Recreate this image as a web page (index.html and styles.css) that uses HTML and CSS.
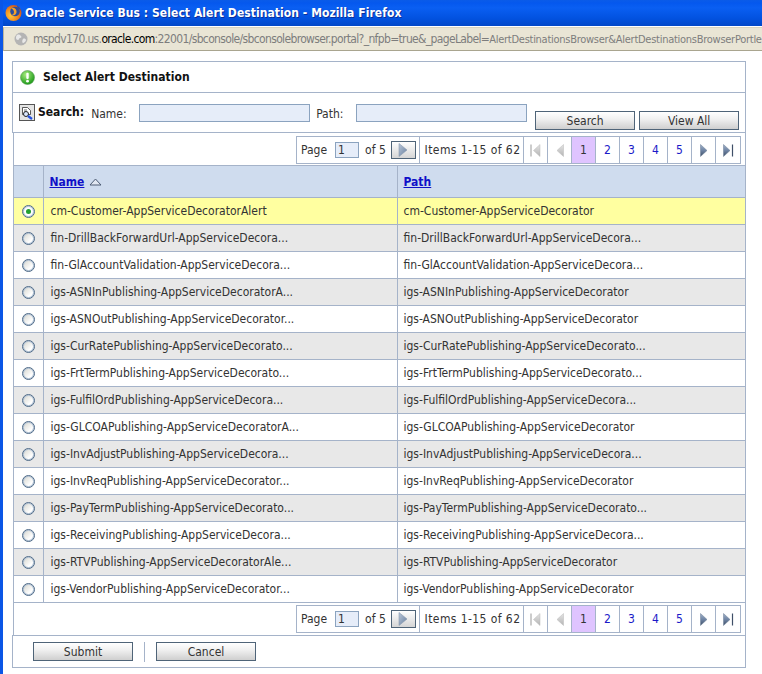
FILE: index.html
```html
<!DOCTYPE html>
<html lang="en">
<head>
<meta charset="utf-8">
<title>Oracle Service Bus : Select Alert Destination - Mozilla Firefox</title>
<link rel="stylesheet" href="styles.css">
</head>
<body>
<svg class="defs" width="0" height="0" aria-hidden="true"><defs>
  <linearGradient id="arrow" x1="0" y1="0" x2="0" y2="1"><stop offset="0" stop-color="#9fb0c8"/><stop offset=".5" stop-color="#6f84a4"/><stop offset="1" stop-color="#3f5068"/></linearGradient>
  <linearGradient id="arrow-off" x1="0" y1="0" x2="0" y2="1"><stop offset="0" stop-color="#e4e4e4"/><stop offset="1" stop-color="#b4b4b4"/></linearGradient>
  <linearGradient id="arrow-go" x1="0" y1="0" x2="1" y2="1"><stop offset="0" stop-color="#b9c6d8"/><stop offset="1" stop-color="#68809f"/></linearGradient>
  <radialGradient id="fox" cx="35%" cy="65%" r="75%"><stop offset="0" stop-color="#ffc83c"/><stop offset=".55" stop-color="#f08a1d"/><stop offset="1" stop-color="#c9461a"/></radialGradient>
  <radialGradient id="g" cx="40%" cy="30%" r="75%"><stop offset="0" stop-color="#a8ec80"/><stop offset="1" stop-color="#12940f"/></radialGradient>
</defs></svg>
<div class="titlebar">
  <svg class="ff-icon" width="17" height="18" viewBox="0 0 17 18"><circle cx="8.500" cy="9" r="8" fill="url(#fox)"/><circle cx="10" cy="7.500" r="4.800" fill="#2c4d9c"/><path d="M6 4c3-1 6 1 5.500 4.500C11 11 8 12.500 5.500 11c2 .2 3.500-1 3.500-3S7.500 5 6 4z" fill="#f4a12a"/><path d="M12 1.500c2 1 3.500 3 4 5.500-1-1.500-2-2.500-3.500-3z" fill="#2c4d9c"/></svg>
  <span class="title-text">Oracle Service Bus : Select Alert Destination - Mozilla Firefox</span>
</div>
<div class="addressbar">
  <svg class="globe" width="14" height="14" viewBox="0 0 14 14"><circle cx="7" cy="7" r="6.500" fill="#b4b4b4"/><path d="M3 3c2-1 3 0 4 1s0 2-1 2-1 2-2 2-2-1-2-2 0-2 1-3zM9 7c1-1 3 0 3 1s-2 3-3 3-1-3 0-4z" fill="#e8e8e8"/></svg>
  <span class="url"><span class="url-dim">mspdv170.us.</span>oracle.com<span class="url-dim">:22001/sbconsole/sbconsolebrowser.portal?_nfpb=true&amp;_pageLabel=<span class="url-tail">AlertDestinationsBrowser&amp;AlertDestinationsBrowserPortle</span></span></span>
</div>
<main class="page">
  <section class="panel-head">
    <svg width="15" height="15" viewBox="0 0 15 15"><circle cx="7.500" cy="7.500" r="7" fill="url(#g)" stroke="#5a9a58" stroke-width=".6"/><rect x="6.300" y="2.800" width="2.400" height="6.200" rx="1" fill="#fff"/><circle cx="7.500" cy="11.200" r="1.400" fill="#fff"/></svg>
    <h1>Select Alert Destination</h1>
  </section>
  <section class="search">
    <svg class="search-icon" width="16" height="17" viewBox="0 0 16 17"><rect x=".5" y=".5" width="15" height="16" fill="#e4e4e4" stroke="#555"/><path d="M3.500 3.500h5l3 3v4h-8z" fill="#fff" stroke="#333" stroke-width=".8"/><path d="M5 6h3M5 8h2" stroke="#444" stroke-width=".8"/><circle cx="7" cy="10" r="2.500" fill="#dbe8ff" stroke="#222"/><path d="M9 12l4 3" stroke="#2250e0" stroke-width="2.200"/></svg>
    <b class="search-label">Search:</b>
    <label class="name-label">Name:</label><input class="field" aria-label="Name">
    <label class="path-label">Path:</label><input class="field" aria-label="Path">
    <button class="btn btn-search">Search</button>
    <button class="btn btn-all">View All</button>
  </section>
  <section class="grid">
    <div class="pager-row">
      <div class="pager">
        <div class="pg-page">Page<input class="pg-input" value="1" aria-label="Page"><span>of 5</span><span class="pg-go"><svg width="10" height="14" viewBox="0 0 10 14"><path d="M1 .5l8 6.500-8 6.500z" fill="url(#arrow-go)" stroke="#8a9ab0" stroke-width=".6"/></svg></span></div>
        <div class="pg-items">Items 1-15 of 62</div>
        <div class="pg-cell"><svg width="11" height="13" viewBox="0 0 11 13"><path d="M1 .5v12" stroke="#aaa" stroke-width="1.200"/><path d="M10 .5L3.500 6.500l6.500 6z" fill="url(#arrow-off)" stroke="#bbb" stroke-width=".5"/></svg></div>
        <div class="pg-cell"><svg width="8" height="13" viewBox="0 0 8 13"><path d="M7.500 .5L1 6.500l6.500 6z" fill="url(#arrow-off)" stroke="#bbb" stroke-width=".5"/></svg></div>
        <div class="pg-cell pg-on">1</div><div class="pg-cell">2</div><div class="pg-cell">3</div><div class="pg-cell">4</div><div class="pg-cell">5</div>
        <div class="pg-cell"><svg width="8" height="13" viewBox="0 0 8 13"><path d="M.5 .5L7 6.500l-6.500 6z" fill="url(#arrow)" stroke="#6b7c94" stroke-width=".5"/></svg></div>
        <div class="pg-cell"><svg width="11" height="13" viewBox="0 0 11 13"><path d="M.5 .5L7 6.500l-6.500 6z" fill="url(#arrow)" stroke="#6b7c94" stroke-width=".5"/><path d="M9.500 .5v12" stroke="#3f4f68" stroke-width="1.200"/></svg></div>
      </div>
    </div>
    <table>
      <thead><tr><th class="c1"></th><th class="c2"><a href="#">Name</a><svg class="sort" width="13" height="8" viewBox="0 0 13 8"><path d="M6.500 1L12 7H1z" fill="#e2e8f2" stroke="#4e5d75"/></svg></th><th><a href="#">Path</a></th></tr></thead>
      <tbody>
        <tr class="sel"><td class="c1"><span class="radio on"></span></td><td>cm-Customer-AppServiceDecoratorAlert</td><td>cm-Customer-AppServiceDecorator</td></tr>
        <tr class="alt"><td class="c1"><span class="radio"></span></td><td>fin-DrillBackForwardUrl-AppServiceDecora...</td><td>fin-DrillBackForwardUrl-AppServiceDecora...</td></tr>
        <tr><td class="c1"><span class="radio"></span></td><td>fin-GlAccountValidation-AppServiceDecora...</td><td>fin-GlAccountValidation-AppServiceDecora...</td></tr>
        <tr class="alt"><td class="c1"><span class="radio"></span></td><td>igs-ASNInPublishing-AppServiceDecoratorA...</td><td>igs-ASNInPublishing-AppServiceDecorator</td></tr>
        <tr><td class="c1"><span class="radio"></span></td><td>igs-ASNOutPublishing-AppServiceDecorator...</td><td>igs-ASNOutPublishing-AppServiceDecorator</td></tr>
        <tr class="alt"><td class="c1"><span class="radio"></span></td><td>igs-CurRatePublishing-AppServiceDecorato...</td><td>igs-CurRatePublishing-AppServiceDecorato...</td></tr>
        <tr><td class="c1"><span class="radio"></span></td><td>igs-FrtTermPublishing-AppServiceDecorato...</td><td>igs-FrtTermPublishing-AppServiceDecorato...</td></tr>
        <tr class="alt"><td class="c1"><span class="radio"></span></td><td>igs-FulfilOrdPublishing-AppServiceDecora...</td><td>igs-FulfilOrdPublishing-AppServiceDecora...</td></tr>
        <tr><td class="c1"><span class="radio"></span></td><td>igs-GLCOAPublishing-AppServiceDecoratorA...</td><td>igs-GLCOAPublishing-AppServiceDecorator</td></tr>
        <tr class="alt"><td class="c1"><span class="radio"></span></td><td>igs-InvAdjustPublishing-AppServiceDecora...</td><td>igs-InvAdjustPublishing-AppServiceDecora...</td></tr>
        <tr><td class="c1"><span class="radio"></span></td><td>igs-InvReqPublishing-AppServiceDecorator...</td><td>igs-InvReqPublishing-AppServiceDecorator</td></tr>
        <tr class="alt"><td class="c1"><span class="radio"></span></td><td>igs-PayTermPublishing-AppServiceDecorato...</td><td>igs-PayTermPublishing-AppServiceDecorato...</td></tr>
        <tr><td class="c1"><span class="radio"></span></td><td>igs-ReceivingPublishing-AppServiceDecora...</td><td>igs-ReceivingPublishing-AppServiceDecora...</td></tr>
        <tr class="alt"><td class="c1"><span class="radio"></span></td><td>igs-RTVPublishing-AppServiceDecoratorAle...</td><td>igs-RTVPublishing-AppServiceDecorator</td></tr>
        <tr><td class="c1"><span class="radio"></span></td><td>igs-VendorPublishing-AppServiceDecorator...</td><td>igs-VendorPublishing-AppServiceDecorator</td></tr>
      </tbody>
    </table>
    <div class="pager-row pager-row-bottom">
      <div class="pager">
        <div class="pg-page">Page<input class="pg-input" value="1" aria-label="Page"><span>of 5</span><span class="pg-go"><svg width="10" height="14" viewBox="0 0 10 14"><path d="M1 .5l8 6.500-8 6.500z" fill="url(#arrow-go)" stroke="#8a9ab0" stroke-width=".6"/></svg></span></div>
        <div class="pg-items">Items 1-15 of 62</div>
        <div class="pg-cell"><svg width="11" height="13" viewBox="0 0 11 13"><path d="M1 .5v12" stroke="#aaa" stroke-width="1.200"/><path d="M10 .5L3.500 6.500l6.500 6z" fill="url(#arrow-off)" stroke="#bbb" stroke-width=".5"/></svg></div>
        <div class="pg-cell"><svg width="8" height="13" viewBox="0 0 8 13"><path d="M7.500 .5L1 6.500l6.500 6z" fill="url(#arrow-off)" stroke="#bbb" stroke-width=".5"/></svg></div>
        <div class="pg-cell pg-on">1</div><div class="pg-cell">2</div><div class="pg-cell">3</div><div class="pg-cell">4</div><div class="pg-cell">5</div>
        <div class="pg-cell"><svg width="8" height="13" viewBox="0 0 8 13"><path d="M.5 .5L7 6.500l-6.500 6z" fill="url(#arrow)" stroke="#6b7c94" stroke-width=".5"/></svg></div>
        <div class="pg-cell"><svg width="11" height="13" viewBox="0 0 11 13"><path d="M.5 .5L7 6.500l-6.500 6z" fill="url(#arrow)" stroke="#6b7c94" stroke-width=".5"/><path d="M9.500 .5v12" stroke="#3f4f68" stroke-width="1.200"/></svg></div>
      </div>
    </div>
  </section>
  <section class="footer">
    <button class="btn">Submit</button>
    <span class="divider"></span>
    <button class="btn">Cancel</button>
  </section>
</main>
</body>
</html>
```
FILE: styles.css
```css
* { box-sizing: border-box; }
html, body { margin: 0; height: 674px; overflow: hidden; background: #fff; }
body {
  font-family: "DejaVu Sans Condensed", "DejaVu Sans", sans-serif;
  font-stretch: condensed;
  font-size: 12px;
  color: #333;
  border-left: 3px solid #0a56e6;
}
.defs { display: block; height: 0; }
.titlebar {
  margin-left: -3px;
  height: 26px;
  display: flex;
  align-items: center;
  gap: 3px;
  padding-left: 5px;
  background: linear-gradient(#0a5be8 0, #0558ee 12%, #0a5ff2 30%, #0252e0 70%, #0248c8 100%);
}
.ff-icon { flex: none; }
.title-text { color: #fff; font-weight: bold; font-size: 12px; letter-spacing: .06px; text-shadow: 1px 1px 0 #0a2f9a; }
.addressbar {
  height: 24px;
  margin-top: 1px;
  padding-left: 10px;
  display: flex;
  align-items: center;
  gap: 5px;
  background: #e9e5d5;
  border: 1px solid #b9b59f;
  border-right: 0;
  border-top-color: #d8d4c0;
  border-bottom-color: #a9a58f;
  white-space: nowrap;
  overflow: hidden;
}
.globe { flex: none; }
.url { font-size: 12px; letter-spacing: -.65px; color: #000; }
.url-dim { color: #7d7d7d; }
.url-tail { font-size: 11px; letter-spacing: -.27px; }
.page { width: 734px; margin: 10px 0 0 9px; }
.panel-head {
  height: 32px;
  border: 1px solid #a5b3c9;
  display: flex;
  align-items: center;
  gap: 8px;
  padding-left: 7px;
}
.panel-head h1 { margin: 0 0 1px; font-size: 12px; letter-spacing: .05px; font-weight: bold; color: #111; }
.search {
  height: 40px;
  border: 1px solid #a5b3c9;
  border-top: 0;
  display: flex;
  align-items: flex-start;
  padding: 11px 0 0 6px;
}
.search-icon { flex: none; }
.search-label { margin-left: 3px; color: #111; font-size: 12px; line-height: 16px; font-weight: bold; }
.name-label { margin-left: 7px; width: 48px; line-height: 20px; }
.path-label { margin-left: 6px; width: 40px; line-height: 20px; }
.field { width: 171px; height: 18px; background: #e6edf9; border: 1px solid #8ba3bf; padding: 0; }
.btn {
  width: 100px;
  height: 19px;
  padding: 0;
  font: inherit;
  font-stretch: inherit;
  color: #333;
  border: 1px solid #4f6478;
  background: linear-gradient(#fff, #f1f1f1 40%, #cfcfcf);
}
.btn-search { margin: 7px 0 0 8px; }
.btn-all { margin: 7px 0 0 4px; }
.grid { margin-left: 1px; border: 1px solid #a5b3c9; border-top: 0; border-bottom: 0; }
.pager-row { height: 32px; display: flex; justify-content: flex-end; padding: 3px 4px 0 0; }
.pager-row-bottom { padding-top: 2px; }
.pager { display: flex; height: 28px; border: 1px solid #a5b3c9; color: #333; }
.pg-page { width: 123px; display: flex; align-items: center; padding-left: 4px; white-space: pre; border-right: 1px solid #a5b3c9; }
.pg-input { width: 24px; height: 16px; border: 1px solid #8ba3bf; background: #e6edf9; padding: 0 0 0 2px; margin: 0 6px 0 8px; font: inherit; font-stretch: inherit; color: #333; }
.pg-go { width: 25px; height: 18px; margin-left: 5px; border: 1px solid #4f6478; background: linear-gradient(#fff, #d5d5d5); display: flex; align-items: center; justify-content: center; }
.pg-items { width: 104px; display: flex; align-items: center; justify-content: center; letter-spacing: .42px; padding-left: 2px; border-right: 1px solid #a5b3c9; white-space: nowrap; }
.pg-cell { width: 24px; display: flex; align-items: center; justify-content: center; color: #1a1ac8; border-right: 1px solid #a5b3c9; }
.pg-cell:last-child { border-right: 0; }
.pg-on { background: #dfc4ff; color: #333; }
table { width: 100%; border-collapse: collapse; table-layout: fixed; }
th { height: 32px; background: #cfdcee; text-align: left; padding: 0 0 0 6px; border: 1px solid #a5b3c9; border-left: 0; }
th:last-child { border-right: 0; }
th a { color: #1010c8; font-weight: bold; }
.sort { margin-left: 5px; }
td { height: 27px; padding: 0 0 0 7px; border: 1px solid #a5b3c9; border-left: 0; color: #333; white-space: nowrap; overflow: hidden; }
td:last-child { border-right: 0; padding-left: 6px; }
th.c1, td.c1 { width: 29px; padding: 0; text-align: center; }
th.c2 { width: 354px; }
.sel td { background: #ffffa0; }
.alt td { background: #e8e8e8; }
.radio { display: inline-block; width: 13px; height: 13px; border-radius: 50%; border: 1px solid #4e6a88; box-shadow: inset 0 0 0 1px #b4c4d6; background: linear-gradient(135deg, #d4d4cc, #fff 70%); vertical-align: middle; position: relative; }
.radio.on { background: #fff; }
.radio.on::after { content: ""; position: absolute; left: 3px; top: 3px; width: 5px; height: 5px; border-radius: 50%; background: #22a030; }
.footer {
  height: 33px;
  border: 1px solid #a5b3c9;
  display: flex;
  align-items: center;
  padding-left: 20px;
}
.divider { width: 1px; height: 20px; background: #a5b3c9; margin: 0 11px; }
```
